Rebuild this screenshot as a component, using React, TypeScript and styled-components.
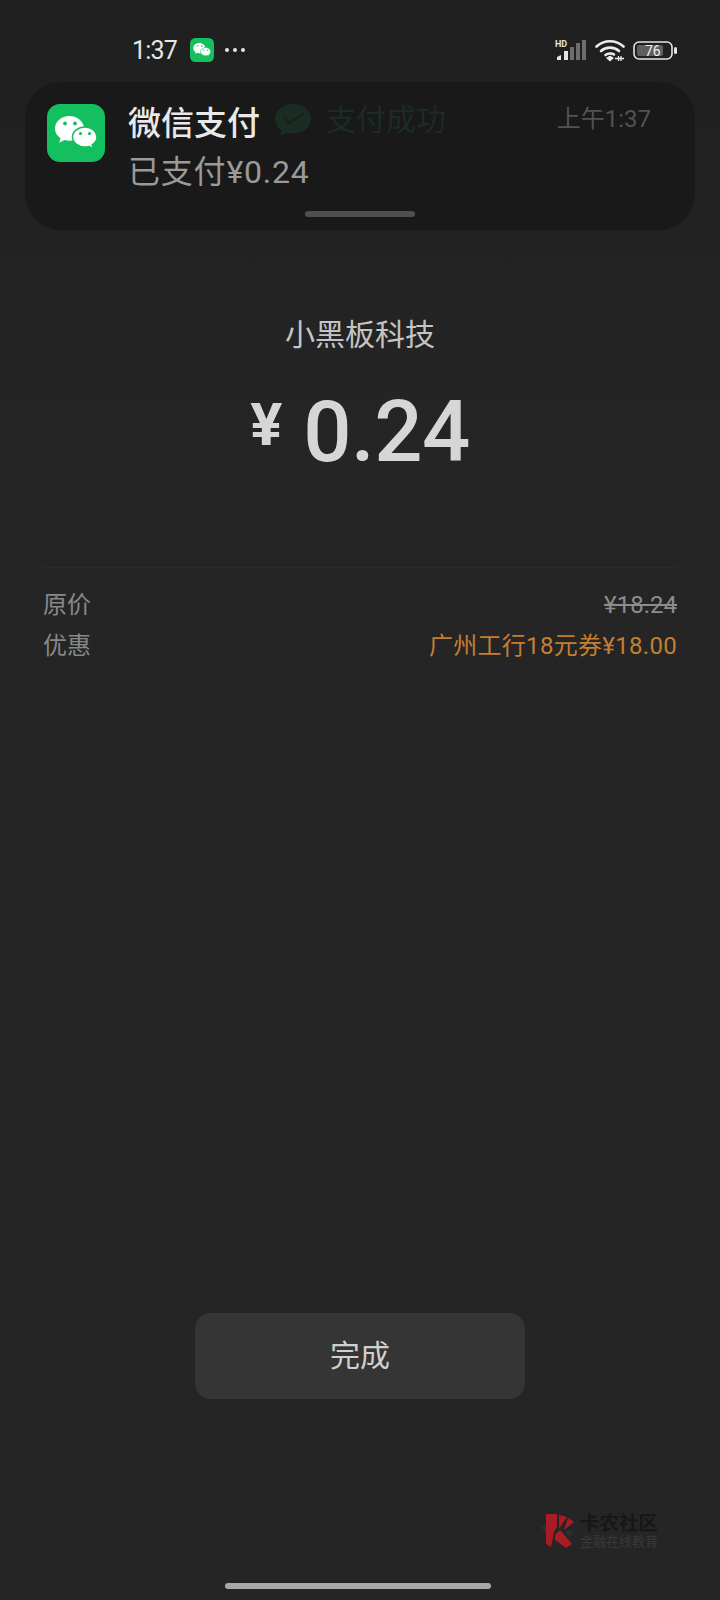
import styled, { createGlobalStyle } from 'styled-components'

const GlobalStyle = createGlobalStyle`
  html, body {
    margin: 0;
    padding: 0;
    background: #252525;
  }
  * {
    box-sizing: border-box;
  }
`

const FONT = '"Roboto", "Noto Sans CJK SC", sans-serif'

const Page = styled.div`
  width: 720px;
  height: 1600px;
  display: flex;
  flex-direction: column;
  overflow: hidden;
  font-family: ${FONT};
  background: linear-gradient(#1f1f1f 0, #222222 220px, #252525 460px);
`

const StatusBar = styled.div`
  height: 82px;
  flex: none;
  display: flex;
  align-items: center;
  padding: 18px 43px 0 132px;
`

const Clock = styled.span`
  font-size: 25px;
  letter-spacing: -0.8px;
  color: #e6e6e6;
  line-height: 1;
`

const StatusApp = styled.span`
  display: flex;
  margin-left: 13px;
`

const Dots = styled.span`
  display: flex;
  gap: 4px;
  margin-left: 11px;

  i {
    width: 4px;
    height: 4px;
    border-radius: 50%;
    background: #e6e6e6;
  }
`

const StatusRight = styled.div`
  margin-left: auto;
  display: flex;
  align-items: center;
  gap: 8px;
`

const Notification = styled.div`
  flex: none;
  position: relative;
  height: 148px;
  margin: 0 25px;
  border-radius: 36px;
  background: #191919;
  display: flex;
  padding: 22px 44px 0 22px;
`

const AppIcon = styled.div`
  flex: none;
  margin-right: 23px;
`

const NotifBody = styled.div`
  flex: 1;
  display: flex;
  flex-direction: column;
`

const NotifTop = styled.div`
  display: flex;
  align-items: flex-start;
`

const NotifTitle = styled.span`
  font-size: 33px;
  line-height: 40px;
  font-weight: 500;
  color: #e9e9e9;
`

const GhostGroup = styled.span`
  display: flex;
  align-items: center;
  gap: 15px;
  margin-left: 15px;
  margin-top: -3px;
  height: 38px;
`

const GhostText = styled.span`
  font-size: 30px;
  color: #1b2c22;
  line-height: 1;
`

const NotifTime = styled.span`
  margin-left: auto;
  font-size: 24px;
  line-height: 30px;
  color: #525252;
`

const NotifText = styled.span`
  font-size: 32px;
  line-height: 38px;
  letter-spacing: 0.8px;
  margin-top: 9px;
  color: #9a9a9a;
`

const Handle = styled.div`
  position: absolute;
  left: 280px;
  bottom: 13px;
  width: 110px;
  height: 6px;
  border-radius: 3px;
  background: #4f4f4f;
`

const Receipt = styled.div`
  flex: 1;
  display: flex;
  flex-direction: column;
  align-items: center;
  padding-top: 87px;
`

const Merchant = styled.div`
  font-size: 30px;
  line-height: 36px;
  color: #c4c4c4;
`

const Amount = styled.div`
  display: flex;
  align-items: flex-start;
  margin-top: 26px;
  color: #d6d6d6;
  font-weight: 500;
`

const Currency = styled.span`
  font-size: 60px;
  line-height: 70px;
  padding-top: 11px;
  margin-right: 21px;
  font-weight: 700;
`

const Digits = styled.span`
  font-size: 85px;
  line-height: 106px;
  letter-spacing: -0.5px;
`

const Details = styled.div`
  align-self: stretch;
  margin: 82px 43px 0;
  padding-top: 23px;
  border-top: 1px solid #2b2b2b;
  display: flex;
  flex-direction: column;
  gap: 13px;
`

const Row = styled.div`
  display: flex;
  justify-content: space-between;
  font-size: 24px;
  line-height: 28px;
  color: #888888;
`

const OldPrice = styled.span`
  color: #8c8c8c;
  text-decoration: line-through;
`

const Discount = styled.span`
  color: #c57e30;
  letter-spacing: 0.3px;
`

const DoneButton = styled.button`
  margin-top: auto;
  margin-bottom: 10px;
  width: 330px;
  height: 86px;
  padding: 0 0 6px;
  border: none;
  border-radius: 16px;
  background: #353535;
  color: #d0d0d0;
  font-family: ${FONT};
  font-size: 30px;
`

const Watermark = styled.div`
  align-self: flex-end;
  display: flex;
  gap: 3px;
  margin: 104px 62px 0 0;
  align-items: center;
`

const WatermarkText = styled.div`
  display: flex;
  flex-direction: column;
`

const WatermarkName = styled.span`
  font-size: 19.5px;
  line-height: 21px;
  font-weight: 700;
  color: #171717;
`

const WatermarkSub = styled.span`
  font-size: 13px;
  line-height: 15px;
  color: #393939;
`

const HomeBar = styled.div`
  flex: none;
  width: 266px;
  height: 6px;
  margin: 34px 0 11px 225px;
  border-radius: 3px;
  background: #a8a8a8;
`

const WeChatGlyph = ({ size, radius }: { size: number; radius: number }) => (
  <svg width={size} height={size} viewBox="0 0 58 58">
    <rect width="58" height="58" rx={radius} fill="#14bf5f" />
    <path
      d="M22.500 12C14.500 12 8 17.500 8 24.500c0 4 2.100 7.400 5.500 9.700l-1.300 4.600 5.200-2.900c1.700.5 3.400.8 5.100.8C31 36.700 37 31 37 24.500S30.500 12 22.500 12z"
      fill="#fff"
    />
    <path
      d="M50 33c0-5.500-5.200-10-12-10s-12.500 4.500-12.500 10S31.200 43 38 43c1.300 0 2.700-.2 4-.6l4.300 2.400-1.200-3.900C48 39 50 36.200 50 33z"
      fill="#fff"
      stroke="#14bf5f"
      strokeWidth="1.500"
    />
    <g fill="#14bf5f">
      <circle cx="18" cy="19.500" r="1.900" />
      <circle cx="28" cy="19.500" r="1.900" />
      <circle cx="33.500" cy="29.500" r="1.600" />
      <circle cx="42.500" cy="29.500" r="1.600" />
    </g>
  </svg>
)

const GhostPay = () => (
  <svg width="36" height="32" viewBox="0 0 36 32">
    <path
      d="M18 0C8 0 0 6.500 0 14.700c0 4.600 2.500 8.700 6.500 11.400L5.500 32l6.200-3.300c2 .5 4.100.8 6.300.8 10 0 18-6.600 18-14.800S28 0 18 0z"
      fill="#1b2c22"
    />
    <path d="M9 13l5 6L29 9" fill="none" stroke="#16221b" strokeWidth="2.500" />
  </svg>
)

const SignalIcon = () => (
  <svg width="32" height="21" viewBox="0 0 32 21">
    <text x="0" y="7" fontSize="9" fontWeight="700" fontFamily="Roboto, sans-serif" fill="#e4e4e4">HD</text>
    <path d="M2 20v-3l4-2v5z" fill="#e4e4e4" />
    <rect x="9" y="11" width="4" height="9" fill="#e4e4e4" />
    <rect x="15" y="7" width="4" height="13" fill="#6e6e6e" />
    <rect x="21" y="3" width="4" height="17" fill="#6e6e6e" />
    <rect x="27" y="0" width="4" height="20" fill="#6e6e6e" />
  </svg>
)

const WifiIcon = () => (
  <svg width="30" height="23" viewBox="0 0 30 23">
    <g fill="none" stroke="#ececec" strokeWidth="2.600" strokeLinecap="round">
      <path d="M1.500 7.500C9 .5 21 .5 28.500 7.500" />
      <path d="M6 12c5-4.500 13-4.500 18 0" />
      <path d="M10.500 16c2.500-2 6.500-2 8.500-.5" />
    </g>
    <path d="M11 19l4-2.500 4 2.500-4 3.500z" fill="#ececec" />
    <path d="M20 19.500h9M23.500 17v5M26 17v5" stroke="#ececec" strokeWidth="1.300" fill="none" />
  </svg>
)

const BatteryIcon = () => (
  <svg width="44" height="19" viewBox="0 0 44 19">
    <rect x="1" y="1" width="38" height="17" rx="5" fill="none" stroke="#e4e4e4" strokeWidth="1.600" />
    <rect x="4" y="4" width="26" height="11" rx="2" fill="#5e5e5e" />
    <rect x="41" y="6" width="3" height="7" rx="1.500" fill="#e4e4e4" />
    <text x="12" y="14.500" fontSize="14" fontFamily="Roboto, sans-serif" fill="#f0f0f0">76</text>
  </svg>
)

const KnLogo = () => (
  <svg width="36" height="36" viewBox="0 0 36 36">
    <path d="M0 14l7-4v14z" fill="#2e2e2e" />
    <path d="M5 1h11v13l-3 5-3 15-5-3z" fill="#a81c24" />
    <path d="M18 2l8 2-8 12z" fill="#a81c24" />
    <path d="M27 5l6 4-10 8z" fill="#a81c24" />
    <path d="M14 22l5-5 12 14-6 4-11-8z" fill="#a81c24" />
    <path d="M24 18l9-1-4 8z" fill="#2e2e2e" />
  </svg>
)

export default function App() {
  return (
    <>
      <GlobalStyle />
      <Page>
        <StatusBar>
          <Clock>1:37</Clock>
          <StatusApp>
            <WeChatGlyph size={24} radius={13} />
          </StatusApp>
          <Dots>
            <i />
            <i />
            <i />
          </Dots>
          <StatusRight>
            <SignalIcon />
            <WifiIcon />
            <BatteryIcon />
          </StatusRight>
        </StatusBar>

        <Notification>
          <AppIcon>
            <WeChatGlyph size={58} radius={13} />
          </AppIcon>
          <NotifBody>
            <NotifTop>
              <NotifTitle>微信支付</NotifTitle>
              <GhostGroup>
                <GhostPay />
                <GhostText>支付成功</GhostText>
              </GhostGroup>
              <NotifTime>上午1:37</NotifTime>
            </NotifTop>
            <NotifText>已支付¥0.24</NotifText>
          </NotifBody>
          <Handle />
        </Notification>

        <Receipt>
          <Merchant>小黑板科技</Merchant>
          <Amount>
            <Currency>¥</Currency>
            <Digits>0.24</Digits>
          </Amount>
          <Details>
            <Row>
              <span>原价</span>
              <OldPrice>¥18.24</OldPrice>
            </Row>
            <Row>
              <span>优惠</span>
              <Discount>广州工行18元券¥18.00</Discount>
            </Row>
          </Details>
          <DoneButton>完成</DoneButton>
          <Watermark>
            <KnLogo />
            <WatermarkText>
              <WatermarkName>卡农社区</WatermarkName>
              <WatermarkSub>金融在线教育</WatermarkSub>
            </WatermarkText>
          </Watermark>
        </Receipt>
        <HomeBar />
      </Page>
    </>
  )
}
